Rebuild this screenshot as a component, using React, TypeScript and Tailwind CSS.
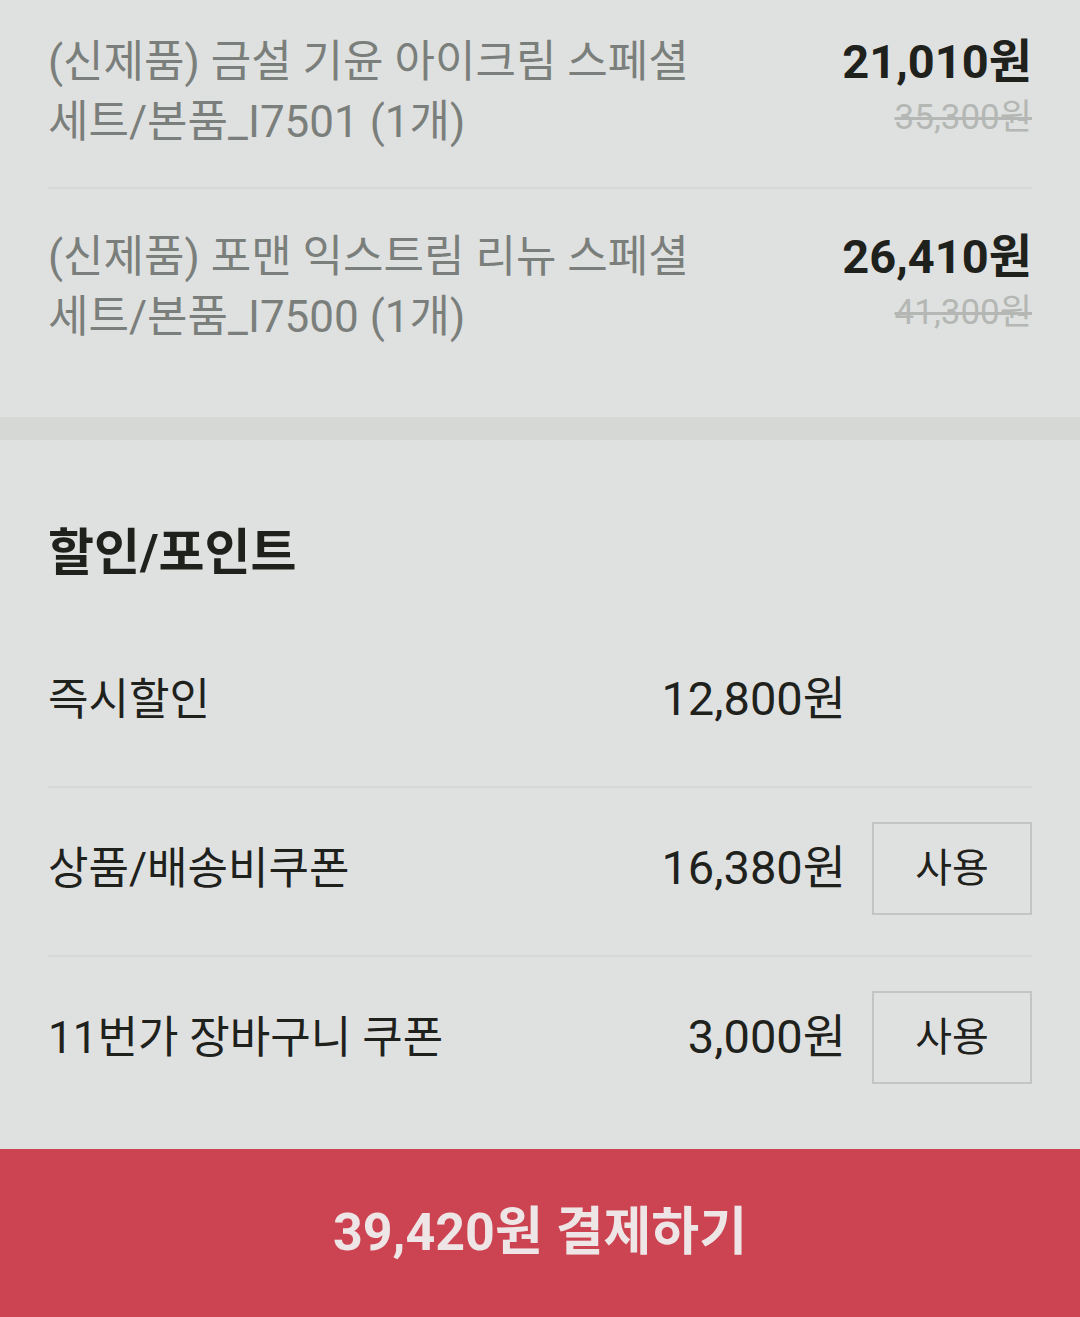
import React from 'react';

interface Product {
  name: string;
  option: string;
  price: string;
  original: string;
}

interface Discount {
  label: string;
  amount: string;
  usable: boolean;
}

const products: Product[] = [
  { name: '(신제품) 금설 기윤 아이크림 스페셜', option: '세트/본품_I7501 (1개)', price: '21,010원', original: '35,300원' },
  { name: '(신제품) 포맨 익스트림 리뉴 스페셜', option: '세트/본품_I7500 (1개)', price: '26,410원', original: '41,300원' },
];

const discounts: Discount[] = [
  { label: '즉시할인', amount: '12,800원', usable: false },
  { label: '상품/배송비쿠폰', amount: '16,380원', usable: true },
  { label: '11번가 장바구니 쿠폰', amount: '3,000원', usable: true },
];

const font = { fontFamily: 'Roboto, "Noto Sans CJK KR", sans-serif' };

export default function App() {
  return (
    <div className="min-h-screen bg-[#dfe1e0] flex flex-col" style={font}>
      <section className="px-12 pb-[70px]">
        {products.map((p, i) => (
          <div
            key={p.option}
            className={
              i === 0
                ? 'flex justify-between pt-[32px] pb-[35px] border-b-2 border-[#d6d8d6]'
                : 'flex justify-between pt-[38px]'
            }
          >
            <div className="text-[44px] leading-[60px] text-[#7b7f7b]">
              <div>{p.name}</div>
              <div>{p.option}</div>
            </div>
            <div className="flex flex-col items-end">
              <div className="text-[47px] leading-[60px] font-bold text-[#1f211c]">{p.price}</div>
              <div className="text-[35px] leading-[52px] text-[#b4b7b4] line-through">{p.original}</div>
            </div>
          </div>
        ))}
      </section>

      <div className="h-[23px] bg-[#d6d8d6]" />

      <section className="px-12 pt-[85px] pb-[23px]">
        <h2 className="text-[50px] leading-[56px] font-bold text-[#1f211c] mb-[38px]">할인/포인트</h2>
        {discounts.map((d, i) => (
          <div
            key={d.label}
            className={
              i < discounts.length - 1
                ? 'flex items-center h-[169px] pb-[6px] border-b-2 border-[#d6d8d6]'
                : 'flex items-center h-[169px] pb-[8px]'
            }
          >
            <div className="flex-1 text-[44px] text-[#1f211c]">{d.label}</div>
            <div className="text-[47px] text-[#1f211c]">{d.amount}</div>
            <div className="w-[186px] flex justify-end">
              {d.usable && (
                <button className="w-[160px] h-[93px] border-2 border-[#c2c5c2] text-[40px] text-[#1f211c]">
                  사용
                </button>
              )}
            </div>
          </div>
        ))}
      </section>

      <button className="h-[168px] w-full bg-[#cc4451] text-[52px] font-bold text-[#eee5e6]">
        39,420원 결제하기
      </button>
    </div>
  );
}
